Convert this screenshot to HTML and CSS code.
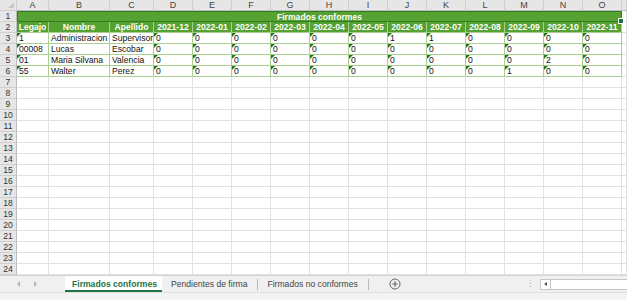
FILE: index.html
```html
<html>
    <head>
        <link rel="stylesheet" href="styles.css">
    </head>
<body>
    <div class="sheet" id="sheet">
        <div class="corner"><span class="cornerTri"></span></div>
    </div>

    <div class="tabBar">
        <div class="tabNav">
            <span class="navArrow navLeft"></span>
            <span class="navArrow navRight"></span>
        </div>
        <div class="tab activeTab">Firmados conformes</div>
        <div class="tab">Pendientes de firma</div>
        <span class="tabSep"></span>
        <div class="tab">Firmados no conformes</div>
        <span class="tabSep"></span>
        <svg class="addTab" width="12" height="12" viewBox="0 0 12 12">
            <circle cx="6" cy="6" r="5" fill="none" stroke="#666" stroke-width="1"/>
            <path d="M6 3.2v5.6M3.2 6h5.6" stroke="#666" stroke-width="1.2"/>
        </svg>
        <span class="tabGrip">&#8942;</span>
        <div class="hScroll">
            <span class="scrollBtn"><span class="scrollArrow"></span></span>
        </div>
    </div>
    <div class="statusBar"></div>

    <script>
        // sheet contents
        const letters = 'ABCDEFGHIJKLMNO'.split('');
        const months = ['2021-12', '2022-01', '2022-02', '2022-03', '2022-04', '2022-05',
            '2022-06', '2022-07', '2022-08', '2022-09', '2022-10', '2022-11'];
        const headers = ['Legajo', 'Nombre', 'Apellido'].concat(months);
        const data = [
            ['1', 'Administracion', 'Supervisor', 0, 0, 0, 0, 0, 0, 1, 1, 0, 0, 0, 0],
            ['00008', 'Lucas', 'Escobar', 0, 0, 0, 0, 0, 0, 0, 0, 0, 0, 0, 0],
            ['01', 'Maria Silvana', 'Valencia', 0, 0, 0, 0, 0, 0, 0, 0, 0, 0, 2, 0],
            ['55', 'Walter', 'Perez', 0, 0, 0, 0, 0, 0, 0, 0, 0, 1, 0, 0]
        ];
        const sheet = document.querySelector('#sheet');

        function cell(cls, text) {
            let div = document.createElement('div');
            div.className = cls;
            if (text !== undefined) div.textContent = text;
            sheet.appendChild(div);
            return div;
        }

        // column letters
        letters.forEach(l => cell('colHead', l));
        cell('colHead');

        // row 1: merged title
        cell('rowHead', '1');
        cell('titleCell', 'Firmados conformes');
        cell('gridCell');

        // row 2: headers
        cell('rowHead', '2');
        headers.forEach(h => cell('headCell', h));
        cell('gridCell');

        // rows 3-6: data
        data.forEach((row, i) => {
            cell('rowHead', `${i + 3}`);
            row.forEach((val, c) => {
                let flagged = c == 0 || c > 2;
                cell(flagged ? 'dataCell flagged' : 'dataCell', val);
            });
            cell('gridCell');
        });

        // empty rows
        for (let r = 7; r <= 24; r++) {
            cell('rowHead', `${r}`);
            for (let c = 0; c <= letters.length; c++) {
                cell('gridCell');
            }
        }
    </script>
</body>
</html>
```

FILE: styles.css
```css
* {
    box-sizing: border-box;
}
body {
    margin: 0;
    width: 627px;
    height: 300px;
    overflow: hidden;
    background: #ffffff;
    font-family: "Liberation Sans", Arial, sans-serif;
}

.sheet {
    display: grid;
    grid-template-columns: 17px 32px 61px 44px repeat(12, 39px) 1fr;
    grid-auto-rows: 11px;
    height: 275px;
    overflow: hidden;
    font-size: 8.6px;
    line-height: 11px;
}

.corner {
    position: relative;
    background: #e6e6e6;
    border-right: 1px solid #cfcfcf;
    border-bottom: 1px solid #cfcfcf;
}
.cornerTri {
    position: absolute;
    right: 2px;
    bottom: 2px;
    width: 0;
    height: 0;
    border-left: 6px solid transparent;
    border-bottom: 6px solid #c6c6c6;
}

.colHead {
    background: #e6e6e6;
    color: #444444;
    text-align: center;
    font-size: 9px;
    border-right: 1px solid #cfcfcf;
    border-bottom: 1px solid #bdbdbd;
}
.rowHead {
    background: #e6e6e6;
    color: #333333;
    text-align: center;
    font-size: 8.6px;
    border-right: 1px solid #bdbdbd;
    border-bottom: 1px solid #cfcfcf;
}

.gridCell {
    border-right: 1px solid #e1e1e1;
    border-bottom: 1px solid #e1e1e1;
}

.titleCell {
    grid-column: span 15;
    position: relative;
    background: #55a131;
    color: #ffffff;
    font-weight: bold;
    text-align: center;
    border: 1px solid #2e7d1f;
}
/* active cell outline with fill handle */
.titleCell::after {
    content: "";
    position: absolute;
    right: -3px;
    bottom: -3px;
    width: 4px;
    height: 4px;
    background: #217346;
    border: 1px solid #ffffff;
}

.headCell {
    background: #55a131;
    color: #ffffff;
    font-weight: bold;
    text-align: center;
    white-space: nowrap;
    overflow: hidden;
    border-right: 1px solid #a9d08e;
    border-bottom: 1px solid #a9d08e;
}

.dataCell {
    position: relative;
    color: #111111;
    padding-left: 2px;
    white-space: nowrap;
    overflow: hidden;
    border-right: 1px solid #a9d08e;
    border-bottom: 1px solid #a9d08e;
}
.flagged::before {
    content: "";
    position: absolute;
    left: 0;
    top: 0;
    width: 0;
    height: 0;
    border-top: 4px solid #1f7a1f;
    border-right: 4px solid transparent;
}

.tabBar {
    display: flex;
    align-items: center;
    height: 17px;
    background: #f0f0f0;
    border-top: 1px solid #d4d4d4;
    font-size: 8.6px;
    color: #444444;
}
.tabNav {
    display: flex;
    gap: 14px;
    width: 65px;
    padding-left: 17px;
}
.navArrow {
    width: 0;
    height: 0;
    border-top: 3px solid transparent;
    border-bottom: 3px solid transparent;
}
.navLeft {
    border-right: 3px solid #b5b5b5;
}
.navRight {
    border-left: 3px solid #b5b5b5;
}

.tab {
    height: 100%;
    padding: 0 8px 0 7px;
    line-height: 16px;
    white-space: nowrap;
}
.activeTab {
    width: 97px;
    background: #ffffff;
    color: #217346;
    font-weight: bold;
    text-align: center;
    border-bottom: 2px solid #217346;
}
.tab + .tab {
    margin-left: 2px;
}
.tabSep {
    width: 1px;
    height: 11px;
    background: #b8b8b8;
    margin: 0 2px;
}
.addTab {
    margin-left: 18px;
}
.tabGrip {
    margin-left: 125px;
    color: #b0b0b0;
    font-size: 9px;
}
.hScroll {
    display: flex;
    margin-left: 5px;
    flex: 1;
    height: 11px;
    background: #ffffff;
    border: 1px solid #c6c6c6;
    border-right: none;
}
.scrollBtn {
    display: flex;
    align-items: center;
    justify-content: center;
    width: 10px;
    border-right: 1px solid #c6c6c6;
}
.scrollArrow {
    width: 0;
    height: 0;
    border-top: 2px solid transparent;
    border-bottom: 2px solid transparent;
    border-right: 3px solid #555555;
}

.statusBar {
    height: 8px;
    background: #f3f3f3;
    border-top: 1px solid #e0e0e0;
}
```
